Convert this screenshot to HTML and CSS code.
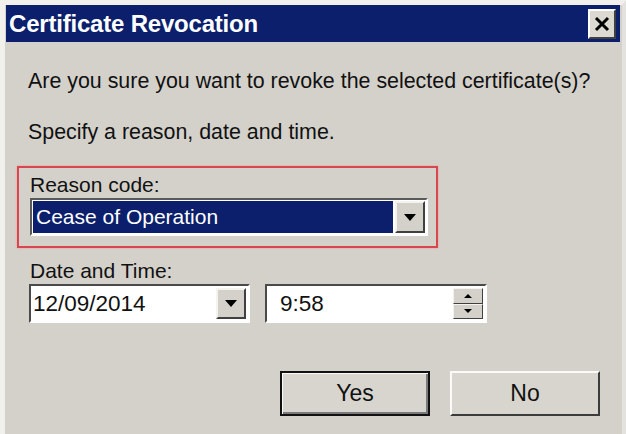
FILE: index.html
```html
<!DOCTYPE html>
<html lang="en">
<head>
  <meta charset="UTF-8" />
  <title>Certificate Revocation</title>
  <link rel="stylesheet" href="styles.css">
</head>
<body>

  <div class="dialog">
    <div class="titlebar">
      <span class="title">Certificate Revocation</span>
      <span class="close">
        <svg width="16" height="16" viewBox="0 0 16 16"><path d="M2 2 L14 14 M14 2 L2 14" stroke="#000" stroke-width="3"/></svg>
      </span>
    </div>

    <div class="content">
      <p class="msg first">Are you sure you want to revoke the selected certificate(s)?</p>
      <p class="msg">Specify a reason, date and time.</p>

      <div class="reason-box">
        <div class="label">Reason code:</div>
        <div class="combo">
          <div class="combo-value">Cease of Operation</div>
          <div class="drop-btn"><span class="arrow"></span></div>
        </div>
      </div>

      <div class="label date-label">Date and Time:</div>
      <div class="fields">
        <div class="field date">
          <span class="field-text">12/09/2014</span>
          <div class="drop-btn"><span class="arrow"></span></div>
        </div>
        <div class="field time">
          <span class="field-text">9:58</span>
          <div class="spin">
            <div class="spin-half"><span class="arrow up"></span></div>
            <div class="spin-half"><span class="arrow small"></span></div>
          </div>
        </div>
      </div>

      <div class="buttons">
        <button class="btn default">Yes</button>
        <button class="btn">No</button>
      </div>
    </div>
  </div>

</body>
</html>
```

FILE: styles.css
```css
body {
  margin: 0;
  background: #d4d1cb;
  font-family: 'Liberation Sans', Arial, sans-serif;
  color: #111;
}

.dialog {
  height: 434px;
  box-sizing: border-box;
  border-top: 5px solid #f1f0ed;
  border-left: 5px solid #f1f0ed;
  border-right: 4px solid #e4e2de;
  background: #d4d1cb;
}

.titlebar {
  height: 37px;
  margin: 0 2px 0 1px;
  background: #0b1f6c;
  display: flex;
  align-items: center;
  justify-content: space-between;
  padding: 0 4px 0 3px;
  box-sizing: border-box;
}

.title {
  color: #fff;
  font-weight: bold;
  font-size: 24px;
  letter-spacing: -0.2px;
}

.close {
  width: 28px;
  height: 30px;
  box-sizing: border-box;
  background: #dcd9d3;
  border: 2px solid;
  border-color: #fff #404040 #404040 #fff;
  display: flex;
  align-items: center;
  justify-content: center;
}

.content {
  padding-left: 12px;
}

.msg {
  margin: 27px 0 0 11px;
  font-size: 21.4px;
  line-height: 24px;
}

.msg.first {
  margin-top: 27px;
}

.reason-box {
  width: 421px;
  height: 82px;
  margin-top: 22px;
  box-sizing: border-box;
  border: 2px solid #d9474e;
  box-shadow: 0 0 2px #ec9a9a;
  padding: 6px 0 0 11px;
}

.label {
  font-size: 21px;
  line-height: 22px;
}

.combo {
  width: 398px;
  height: 38px;
  margin-top: 2px;
  box-sizing: border-box;
  border: 2px solid;
  border-color: #5a5a5a #fff #fff #5a5a5a;
  background: #fff;
  padding: 1px;
  display: flex;
}

.combo-value {
  flex: 1;
  background: #0b1f6c;
  color: #fff;
  font-size: 21px;
  line-height: 32px;
  padding-left: 3px;
}

.drop-btn {
  width: 30px;
  box-sizing: border-box;
  margin-left: 2px;
  background: #d4d1cb;
  border: 2px solid;
  border-color: #f4f3f0 #404040 #404040 #f4f3f0;
  display: flex;
  align-items: center;
  justify-content: center;
}

.arrow {
  width: 0;
  height: 0;
  border-left: 6px solid transparent;
  border-right: 6px solid transparent;
  border-top: 7px solid #000;
}

.arrow.small {
  border-left-width: 4px;
  border-right-width: 4px;
  border-top-width: 4px;
}

.arrow.up {
  border-left: 4px solid transparent;
  border-right: 4px solid transparent;
  border-top: 0;
  border-bottom: 4px solid #000;
}

.date-label {
  margin: 12px 0 0 13px;
}

.fields {
  display: flex;
  gap: 15px;
  margin: 2px 0 0 12px;
}

.field {
  height: 39px;
  box-sizing: border-box;
  border: 2px solid;
  border-color: #4a4a4a #fff #fff #4a4a4a;
  background: #fff;
  padding: 2px;
  display: flex;
  align-items: center;
}

.field.date {
  width: 221px;
}

.field.time {
  width: 222px;
}

.field-text {
  flex: 1;
  font-size: 22.5px;
  padding-left: 0;
}

.time .field-text {
  padding-left: 11px;
}

.field .drop-btn {
  height: 31px;
}

.spin {
  width: 30px;
  height: 31px;
  display: flex;
  flex-direction: column;
}

.spin-half {
  flex: 1;
  background: #d4d1cb;
  border: 1px solid;
  border-color: #f4f3f0 #404040 #404040 #f4f3f0;
  display: flex;
  align-items: center;
  justify-content: center;
}

.buttons {
  display: flex;
  justify-content: flex-end;
  gap: 20px;
  margin-top: 48px;
  padding-right: 22px;
}

.btn {
  width: 150px;
  height: 45px;
  font-family: 'Liberation Sans', Arial, sans-serif;
  font-size: 23px;
  color: #111;
  background: #d8d5cf;
  border: 2px solid;
  border-color: #fbfaf8 #3c3c3c #3c3c3c #fbfaf8;
}

.btn.default {
  outline: 2px solid #111;
  outline-offset: -2px;
  border-color: #111;
  box-shadow: inset 1px 1px 0 #fbfaf8, inset -2px -2px 0 #7a7a7a;
}
```
